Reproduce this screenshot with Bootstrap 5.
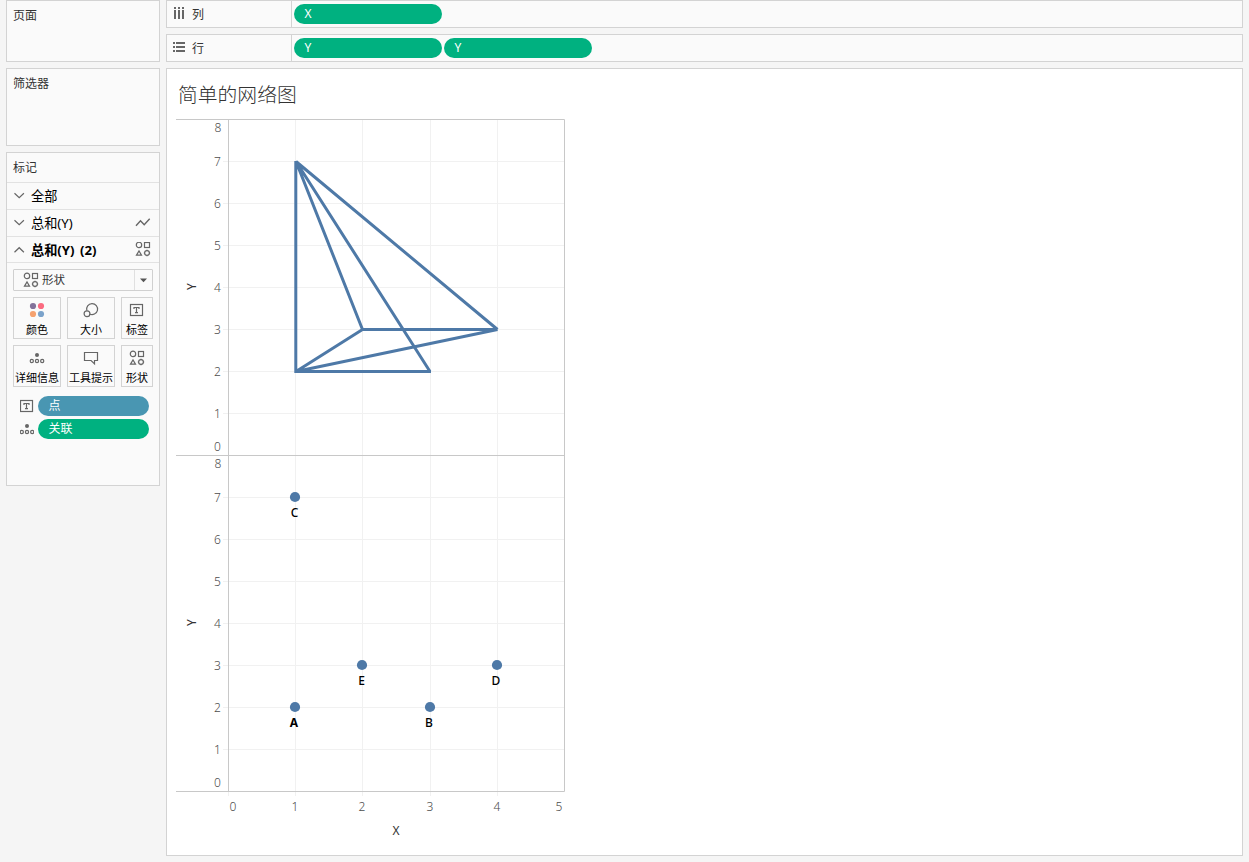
<!DOCTYPE html>
<html lang="zh-CN">
<head>
<meta charset="utf-8">
<title>简单的网络图</title>
<link href="https://cdn.jsdelivr.net/npm/bootstrap@5.3.0/dist/css/bootstrap.min.css" rel="stylesheet">
<style>
  body { background: #f5f5f5; color: #333; font: 12px/18px "Noto Sans", "Noto Sans CJK SC", sans-serif; width: 1249px; height: 862px; overflow: hidden; }
  .workspace { padding: 0 6px 6px; gap: 6px; height: 862px; }
  .side { width: 154px; gap: 6px; }
  .main { gap: 6px; }
  .pane { background: #fafafa; border: 1px solid #d3d3d3; }
  .pane-title { padding: 6px 6px 4px; }
  .pages { height: 62px; }
  .filters { height: 78px; }
  .marks { height: 334px; }
  .marks .pane-title { height: 29px; }
  .layer { height: 27px; border-top: 1px solid #e2e2e2; padding: 0 8px 0 6px; font-size: 13.2px; color: #000; gap: 6px; }
  .layer.current { height: 26px; font-weight: 700; word-spacing: 2px; }
  .layer-body { border-top: 1px solid #e2e2e2; padding: 6px; }
  .picker { height: 22px; border: 1px solid #d0d0d0; border-radius: 1px; background: #fafafa; padding-left: 9px; font-size: 11.5px; gap: 3px; }
  .picker-arrow { width: 18px; border-left: 1px solid #e0e0e0; }
  .mark-grid { display: grid; grid-template-columns: 48px 48px 32px; grid-auto-rows: 42px; gap: 6px; margin-top: 6px; }
  .mark-btn { background: #fafafa; border: 1px solid #d3d3d3; color: #000; font-size: 11px; line-height: 16px; padding: 4px 0 0; white-space: nowrap; }
  .mark-btn svg { display: block; }
  .mark-btn span { margin-top: 4px; }
  .pill { height: 20px; border-radius: 10px; color: #fff; padding-left: 10.5px; line-height: 20px; background: #00b180; }
  .pill.dim { background: #4996b2; }
  .shelf-row { height: 28px; }
  .shelf-name { width: 125px; border-right: 1px solid #d3d3d3; padding: 2px 0 0 6px; gap: 7px; }
  .shelf-row .pill { width: 148px; line-height: 19px; }
  .shelf-pills { padding-left: 2px; gap: 2px; }
  .encodings { margin-top: 9px; gap: 3px; padding: 0 4px 0 7px; }
  .encodings .pill { width: 111px; }
  .view { background: #fff; border: 1px solid #d3d3d3; height: 788px; padding: 11px 9px; }
  .view-title { font-family: "Noto Sans CJK SC", sans-serif; font-size: 19.8px; line-height: 27px; font-weight: 300; margin: 0 0 0 2px; height: 32px; color: #333; }
  .ico { fill: none; stroke: #666; stroke-width: 1.2; flex: none; }
  .grid-lines { stroke: #f1f1f1; }
  .frame { stroke: #c8c8c8; fill: none; }
  .edges { stroke: #4e79a7; stroke-width: 3; fill: none; stroke-linejoin: bevel; }
  .nodes { fill: #4e79a7; }
  .ticks { font-size: 12px; fill: #4c4c4c; text-anchor: middle; font-family: "Noto Sans", sans-serif; font-weight: 300; }
  .names { font-size: 12px; fill: #000; text-anchor: middle; font-family: "Noto Sans", sans-serif; font-weight: 500; }
  .axis-name { font-size: 12px; fill: #333; text-anchor: middle; }
</style>
</head>
<body>
<svg width="0" height="0" class="position-absolute">
  <defs>
    <symbol id="shapes" viewBox="0 0 16 16"><circle cx="4" cy="3.9" r="2.7"/><rect x="9.5" y="1.5" width="5" height="5"/><path d="M1.5 14.1 4 9.9l2.5 4.2z"/><circle cx="12" cy="12" r="2.4"/><path d="M12 8.8v1M12 14.2v1M8.8 12h1M14.2 12h1"/></symbol>
    <symbol id="detail" viewBox="0 0 16 16"><circle cx="8" cy="5" r="2" fill="#666" stroke="none"/><circle cx="2.8" cy="11" r="1.6"/><circle cx="8" cy="11" r="1.6"/><circle cx="13.2" cy="11" r="1.6"/></symbol>
    <symbol id="label" viewBox="0 0 16 16"><rect x="1.5" y="2.5" width="12" height="11"/><path d="M5 7V5.5h5V7M7.5 5.5v5M6 10.6h3"/></symbol>
    <symbol id="down" viewBox="0 0 12 12"><path d="m1.5 3.2 4.7 4.5 4.7-4.5"/></symbol>
    <symbol id="up" viewBox="0 0 12 12"><path d="M1.5 8.2 6.2 3.7l4.7 4.5"/></symbol>
  </defs>
</svg>

<div class="workspace d-flex">
  <aside class="side d-flex flex-column">
    <section class="pane pages"><div class="pane-title">页面</div></section>
    <section class="pane filters"><div class="pane-title">筛选器</div></section>
    <section class="pane marks">
      <div class="pane-title">标记</div>
      <div class="layer d-flex align-items-center"><svg class="ico" width="12" height="12"><use href="#down"/></svg><span>全部</span></div>
      <div class="layer d-flex align-items-center"><svg class="ico" width="12" height="12"><use href="#down"/></svg><span class="flex-grow-1">总和(Y)</span>
        <svg class="ico" width="16" height="16"><path d="m1 10.8 4.5-5 3.7 4 5.5-6" stroke-width="1.4"/></svg></div>
      <div class="layer current d-flex align-items-center"><svg class="ico" width="12" height="12"><use href="#up"/></svg><span class="flex-grow-1">总和(Y) (2)</span>
        <svg class="ico" width="16" height="16"><use href="#shapes" y="-1"/></svg></div>
      <div class="layer-body">
        <div class="picker d-flex align-items-center"><svg class="ico" width="16" height="16"><use href="#shapes"/></svg><span class="flex-grow-1">形状</span>
          <span class="picker-arrow align-self-stretch d-flex align-items-center justify-content-center"><svg width="8" height="5"><path d="M0 .5h7L3.5 4.3z" fill="#555"/></svg></span></div>
        <div class="mark-grid">
          <div class="mark-btn d-flex flex-column align-items-center"><svg width="16" height="16"><circle cx="4" cy="4" r="3.1" fill="#83729a"/><circle cx="12" cy="4" r="3.1" fill="#fb6b80"/><circle cx="4" cy="12" r="3.1" fill="#f5a270"/><circle cx="12" cy="12" r="3.1" fill="#7ba3cb"/></svg><span>颜色</span></div>
          <div class="mark-btn d-flex flex-column align-items-center"><svg class="ico" width="16" height="16"><path d="M3.8 8.6A5.5 5.5 0 1 1 6.6 12"/><circle cx="4" cy="11.7" r="2.9"/></svg><span>大小</span></div>
          <div class="mark-btn d-flex flex-column align-items-center"><svg class="ico" width="16" height="16"><use href="#label"/></svg><span>标签</span></div>
          <div class="mark-btn d-flex flex-column align-items-center"><svg class="ico" width="16" height="16"><use href="#detail"/></svg><span>详细信息</span></div>
          <div class="mark-btn d-flex flex-column align-items-center"><svg class="ico" width="16" height="16"><path d="M1.5 2.5h13v8h-3v3.4l-3.4-3.4H1.5z"/></svg><span>工具提示</span></div>
          <div class="mark-btn d-flex flex-column align-items-center"><svg class="ico" width="16" height="16"><use href="#shapes"/></svg><span>形状</span></div>
        </div>
        <div class="encodings d-flex flex-column">
          <div class="d-flex align-items-center justify-content-between"><svg class="ico" width="14" height="16" viewBox="1 0 14 16"><use href="#label" width="16" height="16"/></svg><div class="pill dim">点</div></div>
          <div class="d-flex align-items-center justify-content-between"><svg class="ico" width="14" height="16" viewBox="1 0 14 16"><use href="#detail" width="16" height="16"/></svg><div class="pill">关联</div></div>
        </div>
      </div>
    </section>
  </aside>

  <main class="main d-flex flex-column flex-grow-1">
    <div class="shelf-row pane d-flex">
      <div class="shelf-name d-flex align-items-center"><svg width="12" height="12" fill="#666" class="mb-1"><path d="M1 0h2v2H1zM5 0h2v2H5zM9 0h2v2H9zM1 3h2v9H1zM5 3h2v9H5zM9 3h2v9H9z"/></svg><span>列</span></div>
      <div class="shelf-pills d-flex align-items-center"><div class="pill">X</div></div>
    </div>
    <div class="shelf-row pane d-flex">
      <div class="shelf-name d-flex align-items-center"><svg width="12" height="12" fill="#666" class="mb-1"><path d="M0 1h2v2H0zM0 5h2v2H0zM0 9h2v2H0zM3 1h9v2H3zM3 5h9v2H3zM3 9h9v2H3z"/></svg><span>行</span></div>
      <div class="shelf-pills d-flex align-items-center"><div class="pill">Y</div><div class="pill">Y</div></div>
    </div>
    <section class="view">
      <h1 class="view-title">简单的网络图</h1>
      <svg class="d-block" width="400" height="730" viewBox="176 112 400 730">
        <g class="grid-lines">
          <path d="M223 161.5H564M223 203.5H564M223 245.5H564M223 287.5H564M223 329.5H564M223 371.5H564M223 413.5H564"/>
          <path d="M223 497.5H564M223 539.5H564M223 581.5H564M223 623.5H564M223 665.5H564M223 707.5H564M223 749.5H564"/>
          <path d="M228.5 792V796M295.5 120V796M362.5 120V796M430.5 120V796M497.5 120V796"/>
        </g>
        <path class="frame" d="M176 119.5H564.5V791.5H176M176 455.5H564M228.5 119V791"/>
        <path class="edges" d="M295.8 161V373M296 161.5 362.5 329.5M296 161.5 430 371.5M296 161.5 497.5 329.5M295 371.5H431M296 371.5 362.5 329.5H497.5L296 371.5"/>
        <g class="nodes"><circle cx="295" cy="497" r="5.1"/><circle cx="362" cy="665" r="5.1"/><circle cx="497" cy="665" r="5.1"/><circle cx="295" cy="707" r="5.1"/><circle cx="430" cy="707" r="5.1"/></g>
        <g class="names"><text x="294.5" y="517">C</text><text x="361.5" y="685">E</text><text x="496" y="685">D</text><text x="294" y="727" font-weight="700">A</text><text x="429" y="727">B</text></g>
        <g class="ticks">
          <text x="218" y="132">8</text><text x="217.5" y="166">7</text><text x="217.5" y="208">6</text><text x="217.5" y="250">5</text><text x="217.5" y="292">4</text><text x="217.5" y="334">3</text><text x="217.5" y="376">2</text><text x="217.5" y="418">1</text><text x="217.5" y="451">0</text>
          <text x="218" y="468">8</text><text x="217.5" y="502">7</text><text x="217.5" y="544">6</text><text x="217.5" y="586">5</text><text x="217.5" y="628">4</text><text x="217.5" y="670">3</text><text x="217.5" y="712">2</text><text x="217.5" y="754">1</text><text x="217.5" y="787">0</text>
          <text x="233" y="811">0</text><text x="295" y="811">1</text><text x="362" y="811">2</text><text x="430" y="811">3</text><text x="497" y="811">4</text><text x="559" y="811">5</text>
        </g>
        <g class="axis-name"><text x="396" y="835">X</text><text transform="translate(196 286.5) rotate(-90)">Y</text><text transform="translate(196 622.5) rotate(-90)">Y</text></g>
      </svg>
    </section>
  </main>
</div>
<script src="https://cdn.jsdelivr.net/npm/bootstrap@5.3.0/dist/js/bootstrap.bundle.min.js"></script>
</body>
</html>
